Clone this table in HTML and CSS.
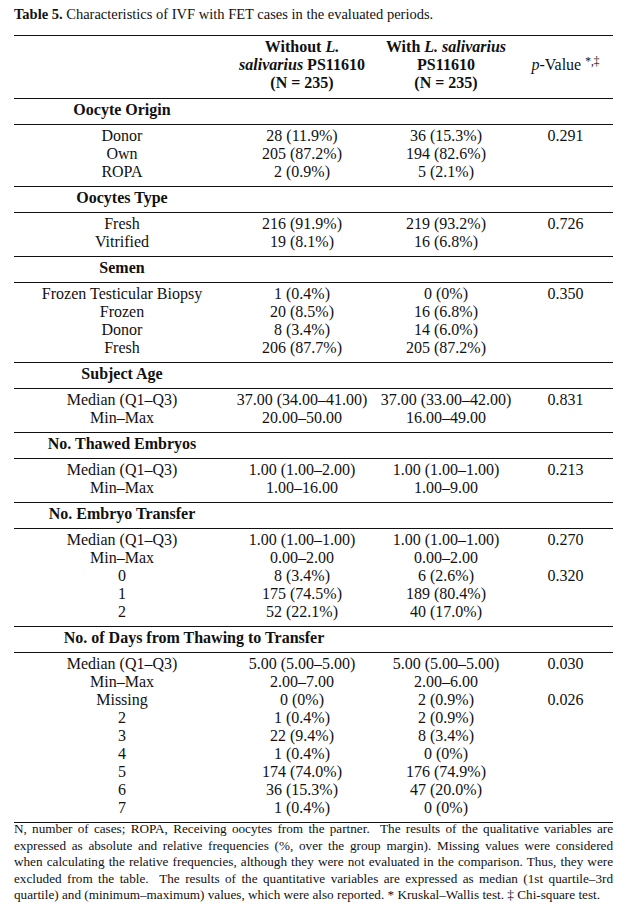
FILE: index.html
```html
<!DOCTYPE html>
<html>
<head>
<meta charset="utf-8">
<link rel="stylesheet" href="styles.css">
</head>
<body>
<div class="page">
  <p class="caption"><b>Table 5.</b> Characteristics of IVF with FET cases in the evaluated periods.</p>
  <div class="table">
    <div class="grp head">
      <div></div>
      <div>Without <i>L.</i><br><i>salivarius</i> PS11610<br>(N = 235)</div>
      <div>With <i>L. salivarius</i><br>PS11610<br>(N = 235)</div>
      <div class="pv"><i>p</i>-Value <sup>*,‡</sup></div>
    </div>

    <div class="grp sec"><div>Oocyte Origin</div></div>
    <div class="grp">
      <div>Donor</div><div>28 (11.9%)</div><div>36 (15.3%)</div><div>0.291</div>
      <div>Own</div><div>205 (87.2%)</div><div>194 (82.6%)</div><div></div>
      <div>ROPA</div><div>2 (0.9%)</div><div>5 (2.1%)</div><div></div>
    </div>

    <div class="grp sec"><div>Oocytes Type</div></div>
    <div class="grp">
      <div>Fresh</div><div>216 (91.9%)</div><div>219 (93.2%)</div><div>0.726</div>
      <div>Vitrified</div><div>19 (8.1%)</div><div>16 (6.8%)</div><div></div>
    </div>

    <div class="grp sec"><div>Semen</div></div>
    <div class="grp">
      <div>Frozen Testicular Biopsy</div><div>1 (0.4%)</div><div>0 (0%)</div><div>0.350</div>
      <div>Frozen</div><div>20 (8.5%)</div><div>16 (6.8%)</div><div></div>
      <div>Donor</div><div>8 (3.4%)</div><div>14 (6.0%)</div><div></div>
      <div>Fresh</div><div>206 (87.7%)</div><div>205 (87.2%)</div><div></div>
    </div>

    <div class="grp sec"><div>Subject Age</div></div>
    <div class="grp">
      <div>Median (Q1–Q3)</div><div>37.00 (34.00–41.00)</div><div>37.00 (33.00–42.00)</div><div>0.831</div>
      <div>Min–Max</div><div>20.00–50.00</div><div>16.00–49.00</div><div></div>
    </div>

    <div class="grp sec"><div>No. Thawed Embryos</div></div>
    <div class="grp">
      <div>Median (Q1–Q3)</div><div>1.00 (1.00–2.00)</div><div>1.00 (1.00–1.00)</div><div>0.213</div>
      <div>Min–Max</div><div>1.00–16.00</div><div>1.00–9.00</div><div></div>
    </div>

    <div class="grp sec"><div>No. Embryo Transfer</div></div>
    <div class="grp">
      <div>Median (Q1–Q3)</div><div>1.00 (1.00–1.00)</div><div>1.00 (1.00–1.00)</div><div>0.270</div>
      <div>Min–Max</div><div>0.00–2.00</div><div>0.00–2.00</div><div></div>
      <div>0</div><div>8 (3.4%)</div><div>6 (2.6%)</div><div>0.320</div>
      <div>1</div><div>175 (74.5%)</div><div>189 (80.4%)</div><div></div>
      <div>2</div><div>52 (22.1%)</div><div>40 (17.0%)</div><div></div>
    </div>

    <div class="grp sec"><div class="span2">No. of Days from Thawing to Transfer</div></div>
    <div class="grp">
      <div>Median (Q1–Q3)</div><div>5.00 (5.00–5.00)</div><div>5.00 (5.00–5.00)</div><div>0.030</div>
      <div>Min–Max</div><div>2.00–7.00</div><div>2.00–6.00</div><div></div>
      <div>Missing</div><div>0 (0%)</div><div>2 (0.9%)</div><div>0.026</div>
      <div>2</div><div>1 (0.4%)</div><div>2 (0.9%)</div><div></div>
      <div>3</div><div>22 (9.4%)</div><div>8 (3.4%)</div><div></div>
      <div>4</div><div>1 (0.4%)</div><div>0 (0%)</div><div></div>
      <div>5</div><div>174 (74.0%)</div><div>176 (74.9%)</div><div></div>
      <div>6</div><div>36 (15.3%)</div><div>47 (20.0%)</div><div></div>
      <div>7</div><div>1 (0.4%)</div><div>0 (0%)</div><div></div>
    </div>
  </div>
  <div class="notes">
    <span class="jl">N, number of cases; ROPA, Receiving oocytes from the partner.&nbsp; The results of the qualitative variables are</span>
    <span class="jl">expressed as absolute and relative frequencies (%, over the group margin). Missing values were considered</span>
    <span class="jl">when calculating the relative frequencies, although they were not evaluated in the comparison. Thus, they were</span>
    <span class="jl">excluded from the table.&nbsp; The results of the quantitative variables are expressed as median (1st quartile–3rd</span>
    <span class="ll">quartile) and (minimum–maximum) values, which were also reported. * Kruskal–Wallis test. ‡ Chi-square test.</span>
  </div>
</div>
</body>
</html>
```

FILE: styles.css
```css
html, body {
  margin: 0;
  padding: 0;
  background: #fff;
}

body {
  font-family: "Liberation Serif", "Times New Roman", serif;
  color: #111;
}

.page {
  width: 599px;
  padding: 5px 16px 0 14px;
}

.caption {
  margin: 0;
  font-size: 14.5px;
  line-height: 18px;
}

.table {
  margin-top: 12px;
  border-top: 1px solid #111;
  border-bottom: 1px solid #111;
}

.grp {
  display: grid;
  grid-template-columns: 216px 144px 144px 95px;
  padding: 2px 0 5px;
  font-size: 16px;
  line-height: 18px;
  text-align: center;
  white-space: nowrap;
}

.grp + .grp {
  border-top: 1px solid #111;
}

.head {
  padding: 2px 0 6px;
  font-weight: bold;
}

.head .pv {
  align-self: center;
  font-weight: normal;
}

.pv sup {
  font-size: 11.5px;
  line-height: 0;
  vertical-align: 5px;
}

.sec {
  font-weight: bold;
}

.sec .span2 {
  grid-column: 1 / 3;
}

.notes {
  margin-top: -2px;
  font-size: 13.2px;
  line-height: 16.6px;
}

.notes .jl {
  display: block;
  white-space: nowrap;
  text-align: justify;
  text-align-last: justify;
}

.notes .ll {
  display: block;
  white-space: nowrap;
}
```
